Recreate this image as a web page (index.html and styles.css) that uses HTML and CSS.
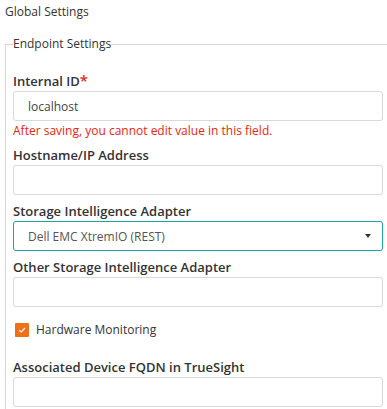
FILE: index.html
```html
<!DOCTYPE html>
<html lang="en">
<head>
    <meta charset="UTF-8">
    <meta name="viewport" content="width=device-width, initial-scale=1.0">
    <title>Global Settings</title>
    <link rel="stylesheet" href="styles.css">
</head>
<body>
    <div class="page-title">Global Settings</div>

    <fieldset class="settings">
        <legend>Endpoint Settings</legend>

        <div class="field">
            <label class="label" for="internalId">Internal ID<span class="req">*</span></label>
            <input type="text" id="internalId" class="text-input" value="localhost">
            <div class="error">After saving, you cannot edit value in this field.</div>
        </div>

        <div class="field">
            <label class="label" for="hostname">Hostname/IP Address</label>
            <input type="text" id="hostname" class="text-input">
        </div>

        <div class="field">
            <label class="label" for="adapter">Storage Intelligence Adapter</label>
            <div class="select-wrap">
                <select id="adapter" class="select-input">
                    <option>Dell EMC XtremIO (REST)</option>
                </select>
            </div>
        </div>

        <div class="field">
            <label class="label" for="otherAdapter">Other Storage Intelligence Adapter</label>
            <input type="text" id="otherAdapter" class="text-input">
        </div>

        <div class="check-row">
            <span class="check-box">
                <svg width="8" height="6" viewBox="0 0 8 6"><path d="M1 3.2 L3.1 5 L7 1" fill="none" stroke="#fff" stroke-width="1.1"/></svg>
            </span>
            <span class="check-label">Hardware Monitoring</span>
        </div>

        <div class="field">
            <label class="label" for="fqdn">Associated Device FQDN in TrueSight</label>
            <input type="text" id="fqdn" class="text-input">
        </div>
    </fieldset>
</body>
</html>
```

FILE: styles.css
```css
body {
    margin: 0;
    font-family: "Open Sans", Arial, sans-serif;
    font-size: 12px;
    line-height: 18px;
    color: #333;
    background: #fff;
    overflow: hidden;
}
.page-title {
    padding: 3px 0 0 5px;
}
.settings {
    margin: 14px 0 0 5px;
    width: 370px;
    padding: 18px 7px 20px 7px;
    border: 1px solid #d6d6d6;
}
.settings legend {
    padding: 0;
    font-size: 12px;
    line-height: 18px;
    color: #333;
}
.field {
    margin-bottom: 7px;
}
.label {
    display: block;
    font-size: 13px;
    font-weight: 600;
    color: #333;
    margin-bottom: 1px;
}
.req {
    color: #e8271e;
    font-size: 15px;
}
.text-input,
.select-input {
    display: block;
    box-sizing: border-box;
    width: 100%;
    height: 30px;
    margin: 0;
    padding: 0 14px;
    border: 1px solid #d9d9d9;
    border-radius: 3px;
    font-family: "Open Sans", Arial, sans-serif;
    font-size: 12px;
    color: #444;
    background: #fff;
    outline: none;
}
.error {
    margin-top: 1px;
    color: #e5260f;
    margin-bottom: -1px;
}
.select-wrap {
    position: relative;
}
.select-input {
    appearance: none;
    -webkit-appearance: none;
    border-color: #1ba39c;
    color: #555;
}
.select-wrap::after {
    content: "";
    position: absolute;
    right: 12px;
    top: 13px;
    border-left: 3px solid transparent;
    border-right: 3px solid transparent;
    border-top: 4px solid #333;
}
.check-row {
    display: flex;
    align-items: center;
    gap: 7px;
    margin: 14px 0 19px 2px;
}
.check-box {
    width: 14px;
    height: 14px;
    background: #f0701a;
    border-radius: 1px;
    display: flex;
    align-items: center;
    justify-content: center;
}
.check-label {
    color: #333;
}
```
